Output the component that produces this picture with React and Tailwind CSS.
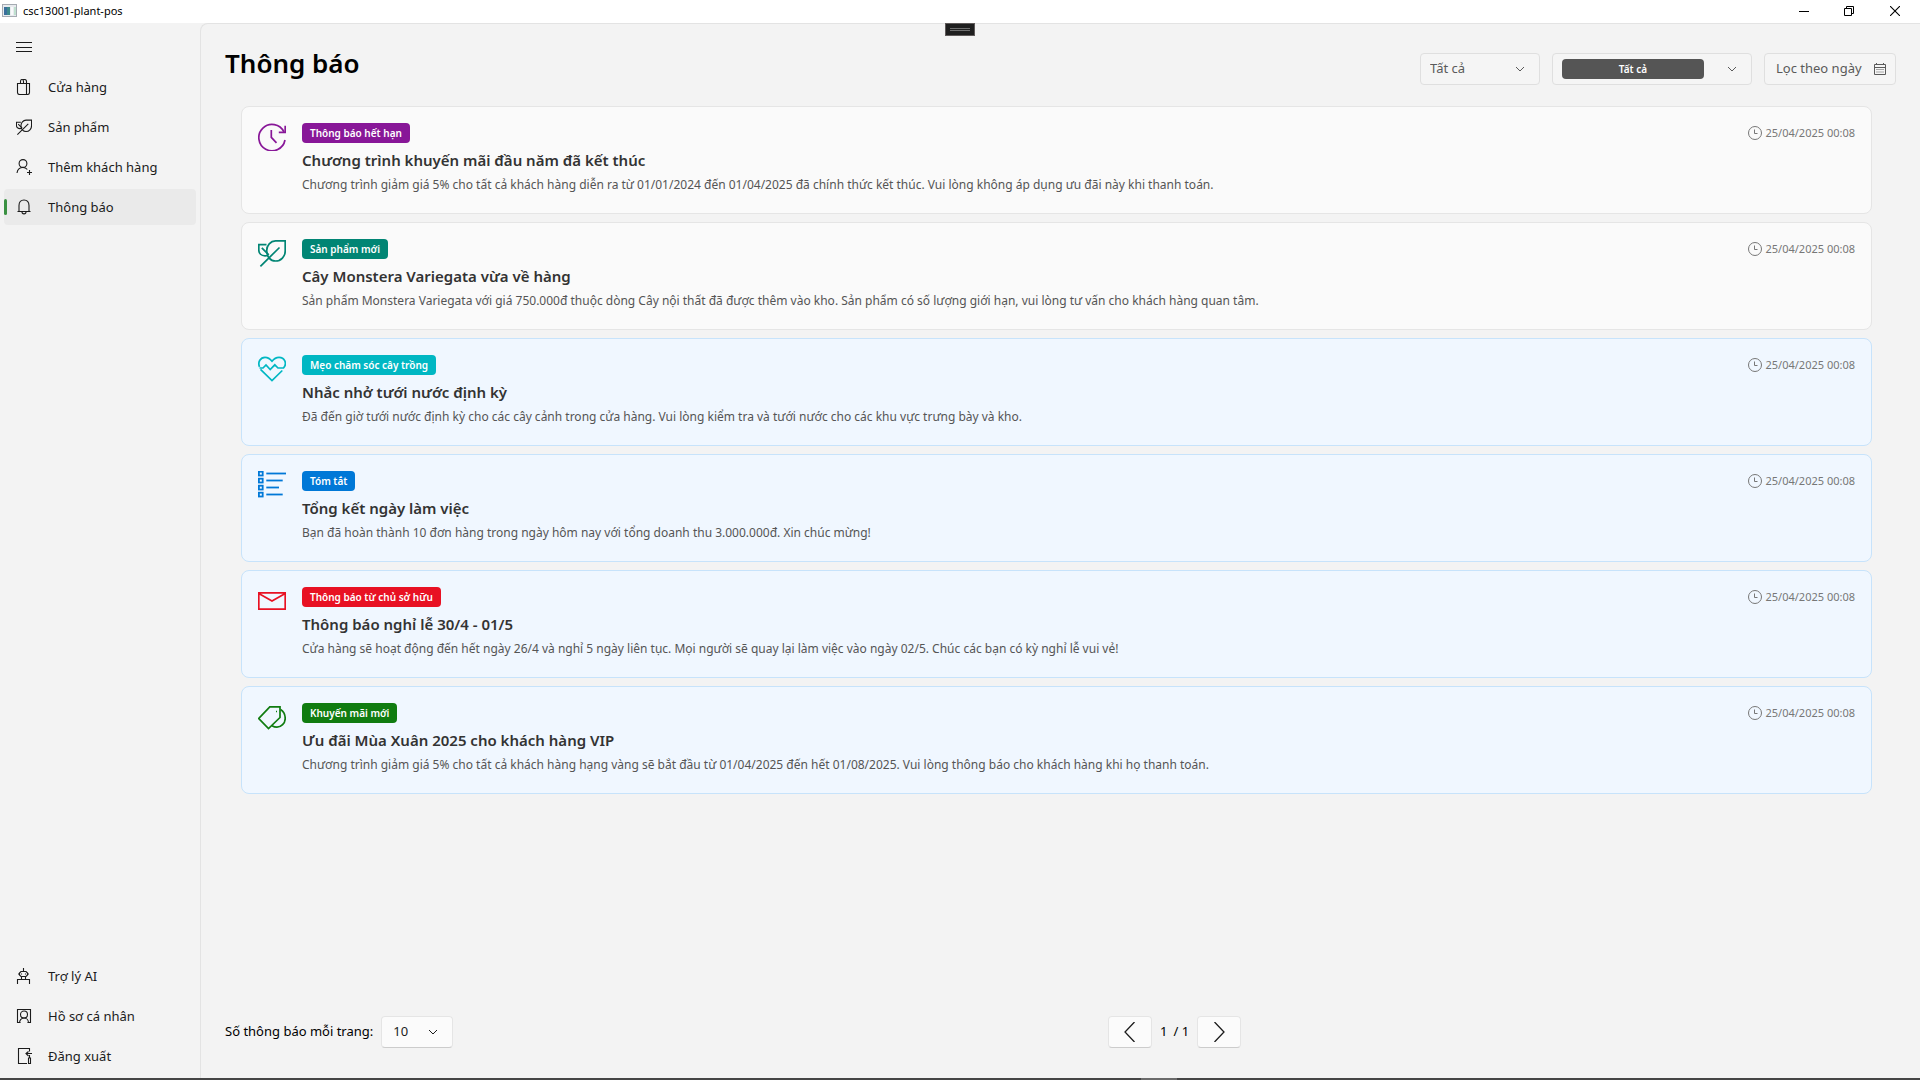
import React, { useState } from "react";

function Svg({ size = 28, box = 28, sw = 1.7, className = "", children }) {
  return (
    <svg
      width={size}
      height={size}
      viewBox={`0 0 ${box} ${box}`}
      fill="none"
      stroke="currentColor"
      strokeWidth={sw}
      className={`shrink-0 ${className}`}
      aria-hidden="true"
    >
      {children}
    </svg>
  );
}

const LeafShape = () => (
  <>
    <path d="M27.2 1.9H17.5C12.5 2 8.7 6.500 8.700 11.500C8.700 17.800 12.500 22 17.500 22C23 22 27.200 17.500 27.200 12Z" />
    <path d="M8.500 5.700H.8V11C.8 14.500 3.300 16.800 7 16.800C8 16.800 9 16.700 10 16.200" />
    <path d="M21.500 8.500L2.400 27.300M3.800 8.800L10.800 15.800" />
  </>
);

const ExpiredIcon = () => (
  <Svg>
    <path d="M27 17A13.200 13.200 0 1 1 25.900 8.800" />
    <path d="M27.200 2.800V9.300H20.800M13.300 7V14.300L18.500 19.800" />
  </Svg>
);
const LeafIcon = () => (
  <Svg>
    <LeafShape />
  </Svg>
);
const HeartIcon = () => (
  <Svg>
    <path d="M1.500 11.800C-.5 7 2.500 2.300 7 2.300C10.500 2.300 12.500 4.200 14 6.200C15.500 4.200 17.500 2.300 21 2.300C26.500 2.300 29.500 8.500 25.500 13H20L16.800 9.800L12.200 14.500L8 10L5 13H1.500" />
    <path d="M2.500 14.300L14 25.500L24.300 15.500" />
  </Svg>
);
const ListIcon = () => (
  <Svg sw={1.800}>
    {[2.500, 9.500, 16.500, 23.500].map((y, i) => (
      <g key={y}>
        <rect x="0.900" y={y - 1.800} width="3.800" height="3.800" />
        <path d={`M8.300 ${y}H${[28, 24.700, 21, 24.700][i]}`} />
      </g>
    ))}
  </Svg>
);
const MailIcon = () => (
  <Svg>
    <path d="M.8 5.800H27.200V22.200H.8ZM.8 6.500L14 14L27.200 6.500" />
  </Svg>
);
const TagIcon = () => (
  <Svg>
    <path d="M11.800 3.900H22V14.500L10.500 25.500L.8 15.500Z" />
    <path d="M18 8.500H19M22.500 6.500C26 8.500 27.200 12 27.200 15.500C27.200 20.500 23 24.200 19 24.200C17 24.200 15.500 23.700 14 22.800" />
  </Svg>
);

const BagIcon = () => (
  <Svg size={16} box={16} sw={1.1}>
    <path d="M1.500 4.500H13.500V13.500Q13.500 15.500 11.500 15.500H3.500Q1.500 15.500 1.500 13.500ZM10.500 4.500V15.500M4.500 4.500V2.500Q4.500.5 6 .5T7.500 2.500V4.500M7 .6Q10.500 0 10.500 2.500V4.500" />
  </Svg>
);
const UserPlusIcon = () => (
  <Svg size={16} box={16} sw={1.100}>
    <circle cx="7" cy="4.500" r="3.900" />
    <path d="M1 14C1.500 10.500 4 8.500 7 8.500C9 8.500 10.300 9.200 11.300 10.500M13.500 11V16M11 13.500H16" />
  </Svg>
);
const BellIcon = () => (
  <Svg size={16} box={16} sw={1.100}>
    <path d="M3 12.500V6.500C3 3 5 1 8 1S13 3 13 6.500V12.500M1.500 12.500H14.500M6 13C6 15.500 10 15.500 10 13" />
  </Svg>
);
const RobotIcon = () => (
  <Svg size={16} box={16} sw={1.1}>
    <path d="M7.500 0V3.500M5 3.500H10L11.500 5V7L10 8.500H5L3.500 7V5ZM2 6H3.500M11.500 6H13M5.500 5.500V6.500M9.500 5.500V6.500M5.500 8.500V11M9.500 8.500V11M1.500 16V11.500H13.500V16" />
  </Svg>
);
const ProfileIcon = () => (
  <Svg size={16} box={16} sw={1.100}>
    <path d="M4.500 14.500H1.500V1.500H14.500V14.500H11.500" />
    <circle cx="8" cy="6.500" r="3.500" />
    <path d="M3.500 15C3.500 12 5.500 10 8 10S12.500 12 12.500 15" />
  </Svg>
);
const ExitIcon = () => (
  <Svg size={16} box={16} sw={1.1}>
    <path d="M13.500 3.500V.5H2.500V15.500H11M16 5.500H10M12.500 3.500L10 5.500L12.500 8M13.500 7V10M12.500 10V15.500H14.500V10Z" />
  </Svg>
);
const ClockIcon = () => (
  <Svg size={14} box={14} sw={1}>
    <circle cx="7" cy="7" r="6.500" />
    <path d="M6.500 3.500V7.500H9.500" />
  </Svg>
);
const CalendarIcon = () => (
  <Svg size={12} box={12} sw={1}>
    <path d="M.5 1.500H11.500V11.500H.5ZM.5 4.500H11.500M2.500 0V2M9.500 0V2" />
    <path d="M2.500 6.500H10M2.500 9H10" strokeDasharray="1 1" />
  </Svg>
);
const Chevron = ({ className = "" }) => (
  <Svg size={8} box={8} sw={1} className={className}>
    <path d="M0 2L4 6L8 2" />
  </Svg>
);

const mainNav = [
  ["Cửa hàng", <BagIcon />],
  ["Sản phẩm", <Svg size={16} sw={1.900}><LeafShape /></Svg>],
  ["Thêm khách hàng", <UserPlusIcon />],
  ["Thông báo", <BellIcon />],
];
const footNav = [
  ["Trợ lý AI", <RobotIcon />],
  ["Hồ sơ cá nhân", <ProfileIcon />],
  ["Đăng xuất", <ExitIcon />],
];

const notices = [
  {
    icon: <ExpiredIcon />, tint: "text-[#881798]", badge: "bg-[#881798]", kind: "Thông báo hết hạn", read: true,
    title: "Chương trình khuyến mãi đầu năm đã kết thúc",
    body: "Chương trình giảm giá 5% cho tất cả khách hàng diễn ra từ 01/01/2024 đến 01/04/2025 đã chính thức kết thúc. Vui lòng không áp dụng ưu đãi này khi thanh toán.",
  },
  {
    icon: <LeafIcon />, tint: "text-[#018574]", badge: "bg-[#018574]", kind: "Sản phẩm mới", read: true,
    title: "Cây Monstera Variegata vừa về hàng",
    body: "Sản phẩm Monstera Variegata với giá 750.000đ thuộc dòng Cây nội thất đã được thêm vào kho. Sản phẩm có số lượng giới hạn, vui lòng tư vấn cho khách hàng quan tâm.",
  },
  {
    icon: <HeartIcon />, tint: "text-[#00b7c3]", badge: "bg-[#00b7c3]", kind: "Mẹo chăm sóc cây trồng",
    title: "Nhắc nhở tưới nước định kỳ",
    body: "Đã đến giờ tưới nước định kỳ cho các cây cảnh trong cửa hàng. Vui lòng kiểm tra và tưới nước cho các khu vực trưng bày và kho.",
  },
  {
    icon: <ListIcon />, tint: "text-[#0078d7]", badge: "bg-[#0078d7]", kind: "Tóm tắt",
    title: "Tổng kết ngày làm việc",
    body: "Bạn đã hoàn thành 10 đơn hàng trong ngày hôm nay với tổng doanh thu 3.000.000đ. Xin chúc mừng!",
  },
  {
    icon: <MailIcon />, tint: "text-[#e81123]", badge: "bg-[#e81123]", kind: "Thông báo từ chủ sở hữu",
    title: "Thông báo nghỉ lễ 30/4 - 01/5",
    body: "Cửa hàng sẽ hoạt động đến hết ngày 26/4 và nghỉ 5 ngày liên tục. Mọi người sẽ quay lại làm việc vào ngày 02/5. Chúc các bạn có kỳ nghỉ lễ vui vẻ!",
  },
  {
    icon: <TagIcon />, tint: "text-[#107c10]", badge: "bg-[#107c10]", kind: "Khuyến mãi mới",
    title: "Ưu đãi Mùa Xuân 2025 cho khách hàng VIP",
    body: "Chương trình giảm giá 5% cho tất cả khách hàng hạng vàng sẽ bắt đầu từ 01/04/2025 đến hết 01/08/2025. Vui lòng thông báo cho khách hàng khi họ thanh toán.",
  },
];

function TitleBar() {
  return (
    <header className="flex h-[23px] shrink-0 items-center bg-white pr-0.5 pb-0.5 pl-0.5 text-black">
      <svg width="15" height="13" viewBox="0 0 15 13" aria-hidden="true">
        <rect x="0.500" y="0.500" width="14" height="12" fill="#e8ebee" stroke="#a5abb2" />
        <rect x="2" y="3" width="6" height="8" fill="#3d8a8c" />
        <rect x="2" y="3" width="3" height="8" fill="#3a6f9c" />
        <rect x="9" y="3" width="2" height="8" fill="#f8fafb" />
        <rect x="12" y="3" width="2" height="8" fill="#bfe0cf" />
      </svg>
      <span className="ml-1.5 flex-1 text-[11px] leading-4">csc13001-plant-pos</span>
      <button className="flex h-5 w-[45px] items-center justify-center" aria-label="Minimize">
        <Svg size={10} box={10} sw={1}><path d="M0 5.500H10" /></Svg>
      </button>
      <button className="flex h-5 w-[45px] items-center justify-center" aria-label="Restore">
        <Svg size={10} box={10} sw={1}><path d="M.5 2.500H7.500V9.500H.5ZM2.500 2V.5H9.500V7.500H8" /></Svg>
      </button>
      <button className="flex h-5 w-[47px] items-center justify-center" aria-label="Close">
        <Svg size={10} box={10} sw={1.100}><path d="M0 0L10 10M10 0L0 10" /></Svg>
      </button>
    </header>
  );
}

function NavItem({ label, icon, active, onClick }) {
  return (
    <button
      onClick={onClick}
      aria-current={active ? "page" : undefined}
      className={`flex h-9 w-full items-center rounded text-left text-[13px] leading-5 text-[#1b1b1b] ${active ? "bg-[#eaeaea]" : ""}`}
    >
      <span className={`h-4 w-[3px] rounded-full ${active ? "bg-[#3a9142]" : ""}`} />
      <span className="mr-4 ml-[9px]">{icon}</span>
      {label}
    </button>
  );
}

function Sidebar() {
  const [page, setPage] = useState("Thông báo");
  const item = ([label, icon]) => (
    <NavItem key={label} label={label} icon={icon} active={page === label} onClick={() => setPage(label)} />
  );
  return (
    <nav className="flex w-[200px] shrink-0 flex-col gap-1 px-1 pt-1.5 pb-1">
      <button className="flex h-9 items-center pl-3 text-[#1b1b1b]" aria-label="Menu">
        <Svg size={16} box={16} sw={1}><path d="M0 3.500H16M0 8.500H16M0 12.500H16" /></Svg>
      </button>
      {mainNav.map(item)}
      <div className="flex-1" />
      {footNav.map(item)}
    </nav>
  );
}

function Filters() {
  return (
    <div className="flex gap-3 text-[13px] text-[#5a5a5a]">
      <div className="relative flex h-8 w-[120px] items-center rounded border border-[#dfdfdf] bg-[#f5f5f5]">
        <select aria-label="Trạng thái" className="h-full w-full appearance-none bg-transparent pl-[9px]">
          <option>Tất cả</option>
        </select>
        <Chevron className="pointer-events-none absolute right-[15px]" />
      </div>
      <div className="flex h-8 w-[200px] items-center rounded border border-[#dfdfdf] bg-[#f5f5f5] pl-[9px]">
        <select
          aria-label="Loại thông báo"
          className="h-5 w-[142px] appearance-none rounded bg-[#555555] text-center text-[10px] font-semibold text-white"
        >
          <option>Tất cả</option>
        </select>
        <Chevron className="ml-6" />
      </div>
      <button className="flex h-8 w-[132px] items-center justify-between rounded border border-[#dfdfdf] bg-[#f5f5f5] pr-[9px] pl-[11px]">
        Lọc theo ngày
        <CalendarIcon />
      </button>
    </div>
  );
}

function Notice({ icon, tint, badge, kind, read, title, body }) {
  return (
    <li
      className={`flex h-[108px] gap-4 rounded-lg border p-4 ${read ? "border-[#e5e5e5] bg-[#fafafa]" : "border-[#c7e3fb] bg-[#f0f7ff]"}`}
    >
      <span className={tint}>{icon}</span>
      <div className="flex min-w-0 flex-1 flex-col items-start">
        <span className={`h-5 rounded px-2 text-[10px] leading-5 font-semibold text-white ${badge}`}>{kind}</span>
        <h2 className="mt-1.5 text-[15px] leading-[22px] font-semibold text-[#333333]">{title}</h2>
        <p className="mt-1 text-[12px] leading-5 text-[#555555]">{body}</p>
      </div>
      <time className="flex h-5 items-center gap-1 text-[11px] text-[#777777]">
        <ClockIcon />
        25/04/2025 00:08
      </time>
    </li>
  );
}

function Pager() {
  const box = "flex h-8 items-center rounded border border-[#e5e5e5] border-b-[#cccccc] bg-[#fbfbfb] text-[#1b1b1b]";
  return (
    <footer className="grid grid-cols-[auto_1fr] items-center text-[13px] text-black">
      <div className="flex items-center gap-2">
        <label htmlFor="page-size">Số thông báo mỗi trang:</label>
        <div className={`relative w-[72px] ${box}`}>
          <select id="page-size" className="h-full w-full appearance-none bg-transparent pl-[11px]">
            <option>10</option>
          </select>
          <Chevron className="pointer-events-none absolute right-[15px]" />
        </div>
      </div>
      <div className="flex items-center justify-center gap-2">
        <button className={`w-11 justify-center ${box}`} aria-label="Trang trước">
          <Svg size={20} box={20} sw={1.300}><path d="M14.500 0L5 10L14.500 20" /></Svg>
        </button>
        <span className="flex gap-1.5"><span>1</span><span>/ 1</span></span>
        <button className={`w-11 justify-center ${box}`} aria-label="Trang sau">
          <Svg size={20} box={20} sw={1.300}><path d="M5.500 0L15 10L5.500 20" /></Svg>
        </button>
      </div>
    </footer>
  );
}

export default function App() {
  return (
    <div className="relative flex h-screen flex-col bg-[#f3f3f3] font-['Noto_Sans','Open_Sans',sans-serif]">
      <TitleBar />
      <div className="absolute top-[23px] left-1/2 flex h-[13px] w-[30px] -translate-x-1/2 flex-col items-center justify-center gap-px border border-[#5f5a5a] bg-[#1f1f1f]">
        <span className="h-px w-5 bg-[#6f6f6f]" />
        <span className="h-px w-5 bg-[#6f6f6f]" />
      </div>
      <div className="flex min-h-0 flex-1">
        <Sidebar />
        <main className="flex min-w-0 flex-1 flex-col rounded-tl-lg border-t border-l border-[#e3e3e3] pt-[29px] pr-6 pb-[30px] pl-6">
          <div className="flex justify-between">
            <h1 className="-mt-2 text-[26px] leading-9 font-semibold text-black">Thông báo</h1>
            <Filters />
          </div>
          <ul className="mt-[21px] flex min-h-0 flex-1 flex-col gap-2 px-4 pr-6">
            {notices.map((n) => (
              <Notice key={n.title} {...n} />
            ))}
          </ul>
          <Pager />
        </main>
      </div>
      <div className="flex h-0.5 shrink-0 justify-center bg-[#454545]">
        <span className="ml-[398px] w-9 bg-[#6b6b6b]" />
      </div>
    </div>
  );
}
